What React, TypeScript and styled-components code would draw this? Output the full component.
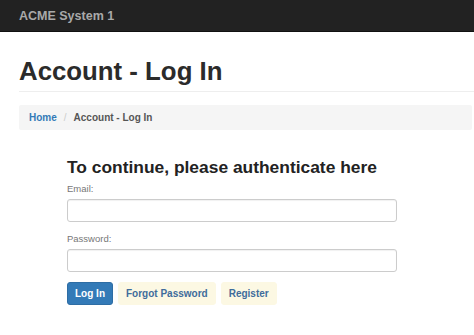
import React from 'react';
import styled, { createGlobalStyle } from 'styled-components';

const GlobalStyle = createGlobalStyle`
  body {
    margin: 0;
    background: #fff;
    font-family: "Liberation Sans", Arial, sans-serif;
    color: #333;
  }
`;

const Navbar = styled.nav`
  height: 31px;
  background: #222;
  border-bottom: 1px solid #111;
  display: flex;
  align-items: center;
  padding-left: 19px;
`;

const Brand = styled.a`
  font-size: 12.5px;
  font-weight: bold;
  color: #a9a9a9;
  text-decoration: none;
`;

const Container = styled.div`
  padding: 0 2px 0 19px;
`;

const PageHeader = styled.div`
  margin: 25px -2px 0 0;
  padding-bottom: 6px;
  border-bottom: 1px solid #eee;
`;

const Title = styled.h1`
  margin: 0;
  font-size: 25.8px;
  line-height: 1.1;
  font-weight: bold;
  color: #2b2b2b;
`;

const Breadcrumb = styled.ol`
  list-style: none;
  margin: 13px 0 0;
  padding: 0 10px;
  height: 25px;
  line-height: 25px;
  background: #f5f5f5;
  border-radius: 2px;
  display: flex;
  font-size: 10px;
  font-weight: bold;
`;

const Crumb = styled.li<{ $active?: boolean }>`
  color: ${p => (p.$active ? '#555' : '#337ab7')};

  &:not(:first-child)::before {
    content: "/";
    padding: 0 7px;
    color: #ccc;
    font-weight: normal;
  }
`;

const FormPanel = styled.form`
  margin: 28px 0 0 48px;
  width: 330px;
`;

const FormTitle = styled.h2`
  margin: 0 0 3px;
  font-size: 17.4px;
  line-height: 1.1;
  font-weight: bold;
  color: #222;
`;

const Field = styled.div`
  margin-bottom: 9px;
`;

const Label = styled.label`
  display: block;
  font-size: 9.5px;
  line-height: 15px;
  color: #777;
  margin-bottom: 3px;
`;

const Input = styled.input`
  display: block;
  box-sizing: border-box;
  width: 100%;
  height: 23px;
  border: 1px solid #ccc;
  border-radius: 3px;
  box-shadow: inset 0 1px 1px rgba(0, 0, 0, 0.06);
  background: #fff;
  padding: 0 8px;
  font-size: 11px;
  font-family: inherit;
`;

const Actions = styled.div`
  display: flex;
  gap: 5px;
  margin-top: 10px;
`;

const Button = styled.button<{ $primary?: boolean }>`
  height: 23px;
  padding: 0 7px;
  border-radius: 3px;
  font-family: inherit;
  font-size: 10px;
  font-weight: bold;
  cursor: pointer;
  background: ${p => (p.$primary ? '#337ab7' : '#fcf8e3')};
  color: ${p => (p.$primary ? '#fff' : '#3f6c9b')};
  border: 1px solid ${p => (p.$primary ? '#2e6da4' : '#fcf8e3')};
`;

const App: React.FC = () => {
  return (
    <>
      <GlobalStyle />
      <Navbar>
        <Brand href="#">ACME System 1</Brand>
      </Navbar>
      <Container>
        <PageHeader>
          <Title>Account - Log In</Title>
        </PageHeader>
        <Breadcrumb>
          <Crumb>Home</Crumb>
          <Crumb $active>Account - Log In</Crumb>
        </Breadcrumb>
        <FormPanel onSubmit={e => e.preventDefault()}>
          <FormTitle>To continue, please authenticate here</FormTitle>
          <Field>
            <Label htmlFor="email">Email:</Label>
            <Input id="email" type="email" />
          </Field>
          <Field>
            <Label htmlFor="password">Password:</Label>
            <Input id="password" type="password" />
          </Field>
          <Actions>
            <Button $primary type="submit">Log In</Button>
            <Button type="button">Forgot Password</Button>
            <Button type="button">Register</Button>
          </Actions>
        </FormPanel>
      </Container>
    </>
  );
};

export default App;
